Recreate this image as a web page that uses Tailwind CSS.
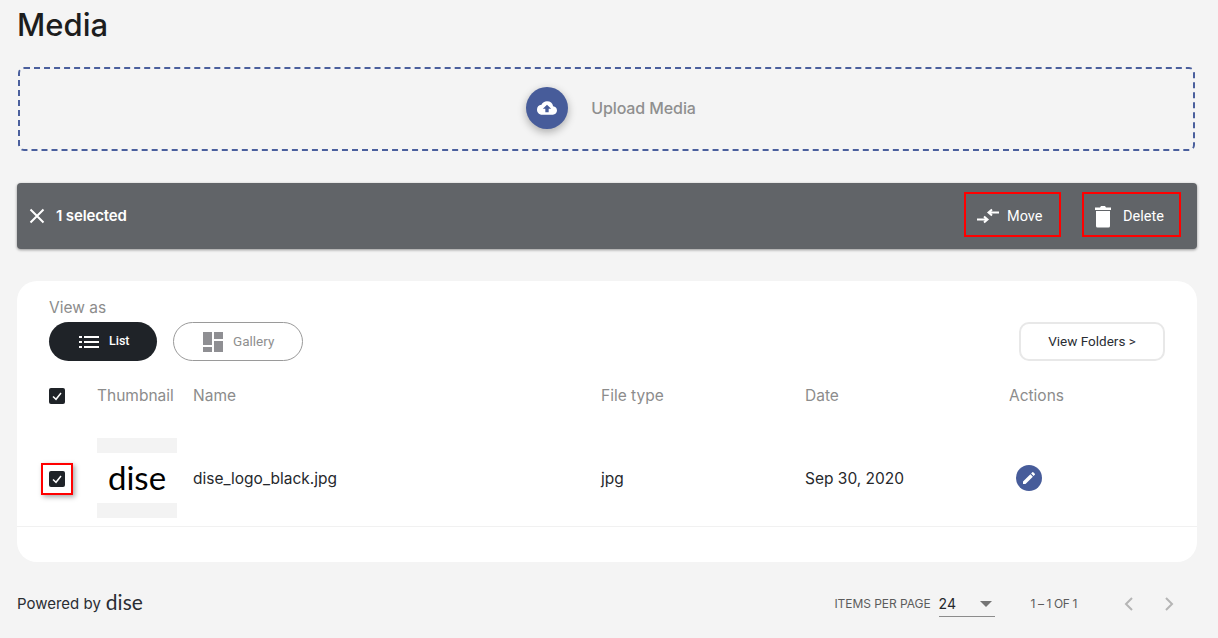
<!DOCTYPE html>
<html lang="en">
<head>
    <meta charset="UTF-8">
    <title>Media</title>
    <script src="https://cdn.jsdelivr.net/npm/@tailwindcss/browser@4"></script>
</head>
<body class="bg-[#f4f4f4] font-['Inter',sans-serif] overflow-hidden">
    <div class="w-[1218px] h-[638px] pl-[17px] pr-[21px]">
        <!-- Header -->
        <h1 class="h-[67px] pt-[6px] text-[31px] leading-[38px] font-medium text-[#1d1d1d]">Media</h1>

        <!-- Upload -->
        <div class="ml-[1px] mr-[2px] h-[84px] border-2 border-dashed border-[#4a5f9d] rounded-[6px] flex items-center justify-center">
            <div class="flex items-center gap-[23px] ml-[9px] -mt-[2px]">
                <div class="w-[42px] h-[42px] rounded-full bg-[#475c9a] shadow-[0_3px_8px_rgba(0,0,0,0.3)] flex items-center justify-center">
                    <svg class="w-[20px] h-[20px]" viewBox="0 0 24 24" fill="#fff"><path d="M19.35 10.04A7.49 7.49 0 0 0 12 4C9.11 4 6.6 5.64 5.35 8.04A5.994 5.994 0 0 0 0 14c0 3.31 2.69 6 6 6h13c2.76 0 5-2.24 5-5 0-2.64-2.05-4.78-4.65-4.96zM14 13v4h-4v-4H7l5-5 5 5h-3z"/></svg>
                </div>
                <span class="text-[16px] font-medium tracking-[-0.1px] text-[#8f8f8f]">Upload Media</span>
            </div>
        </div>

        <!-- Selection bar -->
        <div class="mt-[32px] h-[66px] bg-[#616468] rounded-[4px] shadow-[0_1px_3px_rgba(0,0,0,0.4)] flex items-center pl-[11px] pr-[16px] text-white">
            <svg class="w-[18px] h-[18px]" viewBox="0 0 18 18" fill="none" stroke="#fff" stroke-width="2"><path d="M2.5 2.5l13 13M15.5 2.5l-13 13"/></svg>
            <span class="ml-[10px] text-[15px] font-semibold tracking-[-0.15px] mt-[1px]">1 selected</span>
            <div class="ml-auto flex items-center gap-[21px] -mt-[3px]">
                <div class="w-[97px] h-[45px] border-2 border-[#ff0000] flex items-center pl-[11px] gap-[8px]">
                    <svg class="w-[22px] h-[22px] mt-[2px]" viewBox="0 0 22 22" fill="none" stroke="#fff" stroke-width="2"><path d="M0 14.5h9M7 11.5l3.5 3-3.500 3M22 7.500h-9M15 4.500l-3.500 3 3.500 3"/></svg>
                    <span class="font-['Roboto',sans-serif] text-[14.5px] mt-[5px]">Move</span>
                </div>
                <div class="w-[99px] h-[45px] border-2 border-[#ff0000] flex items-center pl-[9px] gap-[10px]">
                    <svg class="w-[20px] h-[24px] mt-[2px]" viewBox="0 0 20 24" fill="#fff"><path d="M3 7h14v15a1.500 1.500 0 0 1-1.500 1.500h-11A1.500 1.500 0 0 1 3 22zM2 3.500h5L8 2h4l1 1.500h5V6H2z"/></svg>
                    <span class="font-['Roboto',sans-serif] text-[14.5px] mt-[5px]">Delete</span>
                </div>
            </div>
        </div>

        <!-- Card -->
        <div class="mt-[32px] h-[281px] bg-white rounded-[20px] pt-[17px]">
            <div class="px-[32px] text-[15.5px] leading-[19px] text-[#8c8c8c]">View as</div>
            <div class="mt-[5px] pl-[32px] pr-[32px] flex items-center">
                <div class="w-[108px] h-[39px] rounded-full bg-[#1f2328] text-white flex items-center pl-[30px] gap-[10px]">
                    <svg class="w-[20px] h-[12px]" viewBox="0 0 20 12" fill="#fff"><path d="M0 0h3v2H0zM5 0h15v2H5zM0 5h3v2H0zM5 5h15v2H5zM0 10h3v2H0zM5 10h15v2H5z"/></svg>
                    <span class="font-['Roboto',sans-serif] text-[12.5px] font-medium">List</span>
                </div>
                <div class="ml-[16px] w-[130px] h-[39px] rounded-full border border-[#9a9a9a] flex items-center pl-[29px] gap-[10px]">
                    <svg class="w-[20px] h-[20px]" viewBox="0 0 20 20" fill="#8f8f93"><path d="M0 0h9v13H0zM0 15h9v5H0zM11 0h9v7h-9zM11 9h9v11h-9z"/></svg>
                    <span class="font-['Roboto',sans-serif] text-[13.5px] text-[#8f8f8f]">Gallery</span>
                </div>
                <div class="ml-auto w-[146px] h-[39px] rounded-[10px] border-2 border-[#e8e8e8] flex items-center justify-center font-['Roboto',sans-serif] text-[13.5px] text-[#2a2d33]">View Folders &gt;</div>
            </div>

            <!-- Table head -->
            <div class="mt-[18px] h-[34px] grid grid-cols-[80px_96px_408px_204px_204px_1fr] pl-[32px] items-center text-[15.5px] text-[#8c8c8c]">
                <div class="w-[16px] h-[16px] rounded-[2px] bg-[#1f2328] flex items-center justify-center">
                    <svg class="w-[12px] h-[12px]" viewBox="0 0 12 12" fill="none" stroke="#fff" stroke-width="1.500"><path d="M2 6.500l3 2.800 5-6.300"/></svg>
                </div>
                <span class="-ml-[32px]">Thumbnail</span>
                <span class="-ml-[32px]">Name</span>
                <span class="-ml-[32px]">File type</span>
                <span class="-ml-[32px]">Date</span>
                <span class="-ml-[32px]">Actions</span>
            </div>

            <!-- Row -->
            <div class="mt-[25px] h-[89px] border-b border-[#f1f1f1] grid grid-cols-[48px_96px_408px_204px_204px_1fr] pl-[32px] items-center text-[15.5px] text-[#26282c]">
                <div class="-ml-[8px] -mt-[6px] w-[32px] h-[32px] border-2 border-[#ff0000] shadow-[2px_2px_5px_rgba(0,0,0,0.35)] flex items-center justify-center">
                    <div class="w-[16px] h-[16px] rounded-[2px] bg-[#1f2328] flex items-center justify-center">
                        <svg class="w-[12px] h-[12px]" viewBox="0 0 12 12" fill="none" stroke="#fff" stroke-width="1.500"><path d="M2 6.500l3 2.800 5-6.300"/></svg>
                    </div>
                </div>
                <div class="w-[80px] h-[80px] flex flex-col mt-[-8px]">
                    <div class="h-[15px] bg-[#f3f3f3]"></div>
                    <div class="flex-1 flex items-center justify-center font-['Lato',sans-serif] text-[33px] leading-none text-black -mt-[2px]">dise</div>
                    <div class="h-[15px] bg-[#f3f3f3]"></div>
                </div>
                <span class="-mt-[6px]">dise_logo_black.jpg</span>
                <span class="-mt-[6px]">jpg</span>
                <span class="-mt-[6px]">Sep 30, 2020</span>
                <div class="-mt-[8px] ml-[7px] w-[26px] h-[26px] rounded-full bg-[#475c9a] flex items-center justify-center">
                    <svg class="w-[16px] h-[16px]" viewBox="0 0 24 24" fill="#fff"><path d="M3 17.250V21h3.750L17.810 9.940l-3.750-3.750L3 17.250zM20.710 7.040a1 1 0 0 0 0-1.410l-2.340-2.340a1 1 0 0 0-1.410 0l-1.830 1.830 3.750 3.750 1.830-1.830z"/></svg>
                </div>
            </div>
        </div>

        <!-- Footer -->
        <div class="mt-[27px] flex items-start">
            <div class="flex items-center text-[#2a2d33] text-[15px] leading-[30px]">
                <span>Powered by</span>
                <span class="ml-[5px] font-['Lato',sans-serif] text-[21px] leading-[26px] -mt-[4px]">dise</span>
            </div>
            <div class="ml-auto flex items-center text-[12px] text-[#5c5c5c] pt-[2px] mr-[21px]">
                <span class="tracking-[-0.05px]">ITEMS PER PAGE</span>
                <div class="ml-[8px] w-[56px] h-[26px] border-b border-[#8c8c8c] flex items-center justify-between pr-[2px]">
                    <span class="text-[14px] text-[#26282c]">24</span>
                    <svg class="w-[12px] h-[6px] mr-[1px]" viewBox="0 0 10 5" fill="#757575"><path d="M0 0h10L5 5z"/></svg>
                </div>
                <span class="ml-[36px] tracking-[-0.4px]">1 – 1 OF 1</span>
                <svg class="ml-[45px] w-[14px] h-[16px]" viewBox="0 0 14 16" fill="none" stroke="#b5b5b5" stroke-width="2"><path d="M10 2L4 8l6 6"/></svg>
                <svg class="ml-[26px] w-[14px] h-[16px]" viewBox="0 0 14 16" fill="none" stroke="#b5b5b5" stroke-width="2"><path d="M4 2l6 6-6 6"/></svg>
            </div>
        </div>
    </div>
</body>
</html>
